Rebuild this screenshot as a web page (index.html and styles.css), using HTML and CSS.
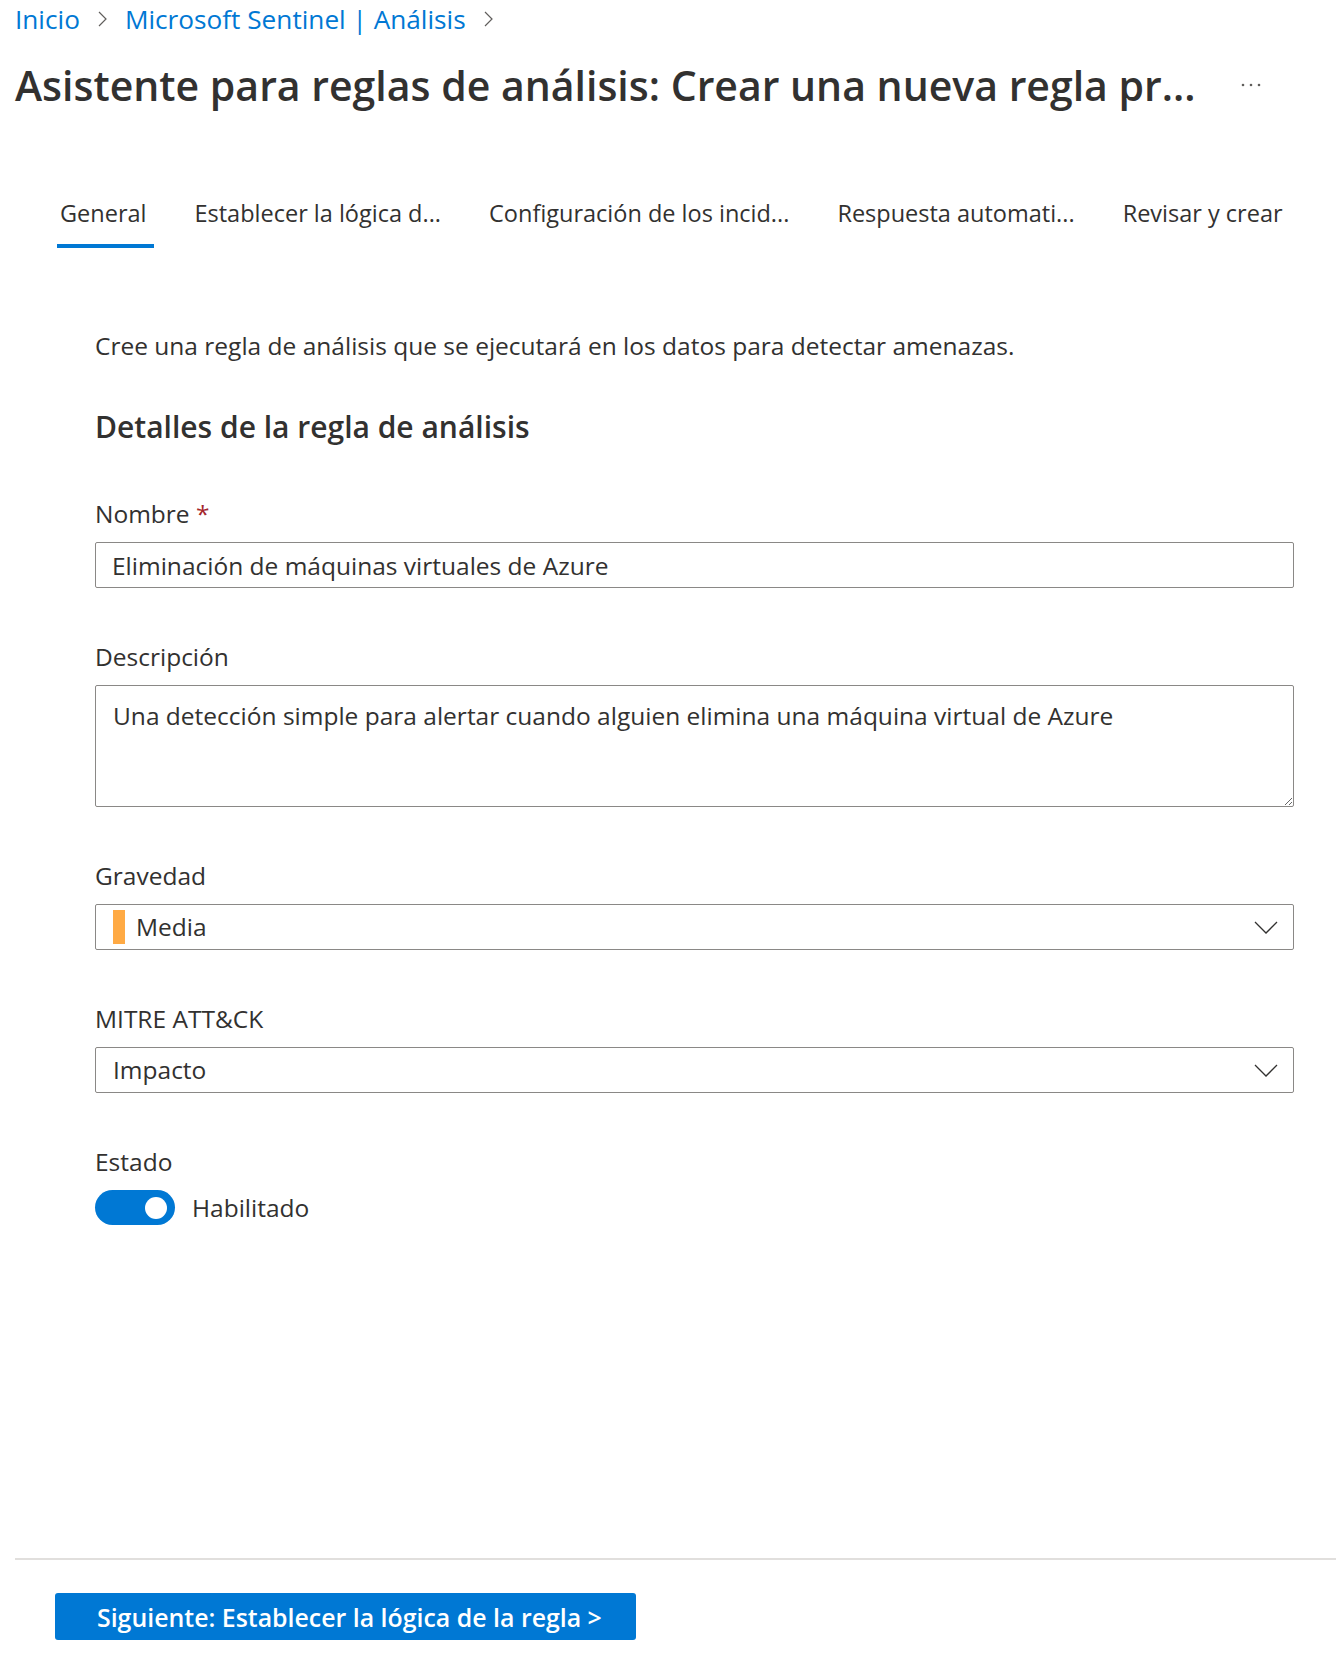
FILE: index.html
```html
<!DOCTYPE html>
<html lang="es">
<head>
    <meta charset="UTF-8">
    <meta name="viewport" content="width=device-width, initial-scale=1.0">
    <title>Asistente para reglas de análisis</title>
    <link rel="stylesheet" href="styles.css">
</head>
<body>
    <div class="page">
        <nav class="breadcrumb">
            <a class="crumb" href="#">Inicio</a>
            <svg class="crumb-sep" width="9" height="16" viewBox="0 0 9 16"><path d="M1 1 L8 8 L1 15"/></svg>
            <a class="crumb" href="#">Microsoft Sentinel | Análisis</a>
            <svg class="crumb-sep" width="9" height="16" viewBox="0 0 9 16"><path d="M1 1 L8 8 L1 15"/></svg>
        </nav>

        <div class="title-row">
            <h1 class="title">Asistente para reglas de análisis: Crear una nueva regla pr...</h1>
            <svg class="more" width="20" height="4" viewBox="0 0 20 4">
                <circle cx="2" cy="2" r="1.3"/>
                <circle cx="10" cy="2" r="1.3"/>
                <circle cx="18" cy="2" r="1.3"/>
            </svg>
        </div>

        <div class="tabs">
            <div class="tab active">General</div>
            <div class="tab">Establecer la lógica d...</div>
            <div class="tab">Configuración de los incid...</div>
            <div class="tab">Respuesta automati...</div>
            <div class="tab">Revisar y crear</div>
        </div>

        <main class="form">
            <p class="intro">Cree una regla de análisis que se ejecutará en los datos para detectar amenazas.</p>
            <h2 class="section-title">Detalles de la regla de análisis</h2>

            <div class="field">
                <label class="field-label" for="name">Nombre <span class="required">*</span></label>
                <input class="text-input" id="name" type="text" value="Eliminación de máquinas virtuales de Azure">
            </div>

            <div class="field">
                <label class="field-label" for="desc">Descripción</label>
                <textarea class="text-area" id="desc">Una detección simple para alertar cuando alguien elimina una máquina virtual de Azure</textarea>
            </div>

            <div class="field">
                <div class="field-label">Gravedad</div>
                <div class="dropdown">
                    <span class="severity medium"></span>
                    <span class="dropdown-value">Media</span>
                    <svg class="chevron" width="24" height="13" viewBox="0 0 24 13"><path d="M1 1 L12 12 L23 1"/></svg>
                </div>
            </div>

            <div class="field">
                <div class="field-label">MITRE ATT&amp;CK</div>
                <div class="dropdown">
                    <span class="dropdown-value">Impacto</span>
                    <svg class="chevron" width="24" height="13" viewBox="0 0 24 13"><path d="M1 1 L12 12 L23 1"/></svg>
                </div>
            </div>

            <div class="field">
                <div class="field-label">Estado</div>
                <div class="toggle-row">
                    <span class="switch on"><span class="knob"></span></span>
                    <span class="toggle-text">Habilitado</span>
                </div>
            </div>
        </main>

        <footer class="footer">
            <button class="primary">Siguiente: Establecer la lógica de la regla &gt;</button>
        </footer>
    </div>
</body>
</html>
```

FILE: styles.css
```css
body {
    margin: 0;
    padding: 0;
    font-family: "Open Sans", "Noto Sans", sans-serif;
    color: #323130;
    background-color: #fff;
}
.page {
    display: flex;
    flex-direction: column;
    height: 100vh;
    padding-left: 15px;
    box-sizing: border-box;
}

/* header */
.breadcrumb {
    display: flex;
    align-items: center;
    gap: 18px;
    height: 38px;
    font-size: 26.2px;
}
.crumb {
    color: #0078d4;
    text-decoration: none;
    line-height: 38px;
}
.crumb-sep path {
    fill: none;
    stroke: #605e5c;
    stroke-width: 1.2;
}
.title-row {
    display: flex;
    align-items: center;
    margin-top: 19px;
}
.title {
    margin: 0;
    font-size: 41px;
    line-height: 56px;
    font-weight: 600;
    white-space: nowrap;
}
.more {
    margin-left: 46px;
    fill: #605e5c;
}

/* tabs */
.tabs {
    display: flex;
    gap: 37px;
    margin-top: 84px;
    margin-left: 42px;
}
.tab {
    font-size: 23.5px;
    line-height: 32px;
    padding: 0 8px 15px 3px;
    border-bottom: 4px solid transparent;
    white-space: nowrap;
}
.tab.active {
    border-bottom-color: #0078d4;
}

/* form */
.form {
    flex: 1;
    padding: 81px 42px 0 80px;
    font-size: 24.5px;
    line-height: 34px;
}
.intro {
    margin: 0;
}
.section-title {
    margin: 45px 0 0;
    font-size: 30px;
    line-height: 38px;
    font-weight: 600;
}
.field {
    margin-top: 52px;
}
.section-title + .field {
    margin-top: 51px;
}
.field-label {
    display: block;
    margin-bottom: 11px;
}
.required {
    color: #a4262c;
}
.text-input, .text-area {
    display: block;
    width: 100%;
    box-sizing: border-box;
    border: 1px solid #8a8886;
    border-radius: 2px;
    font-family: inherit;
    font-size: 24.5px;
    color: #323130;
    outline: none;
}
.text-input {
    height: 46px;
    padding: 0 16px;
}
.text-area {
    height: 122px;
    padding: 13px 17px;
    line-height: 34px;
    resize: vertical;
}
.dropdown {
    display: flex;
    align-items: center;
    height: 46px;
    box-sizing: border-box;
    border: 1px solid #8a8886;
    border-radius: 2px;
    padding: 0 15px 0 17px;
}
.severity {
    width: 12px;
    height: 34px;
    margin-right: 11px;
}
.severity.medium {
    background-color: #ffaa44;
}
.dropdown-value {
    flex: 1;
}
.chevron path {
    fill: none;
    stroke: #323130;
    stroke-width: 1.3;
}
.toggle-row {
    display: flex;
    align-items: center;
    gap: 17px;
}
.switch {
    display: flex;
    align-items: center;
    justify-content: flex-end;
    width: 80px;
    height: 35px;
    box-sizing: border-box;
    padding-right: 8px;
    border-radius: 18px;
    background-color: #0078d4;
}
.knob {
    width: 22px;
    height: 22px;
    border-radius: 50%;
    background-color: #fff;
}

/* footer */
.footer {
    border-top: 2px solid #e1dfdd;
    padding: 33px 0 18px 40px;
}
.primary {
    height: 47px;
    padding: 0 34px 0 42px;
    border: none;
    border-radius: 3px;
    background-color: #0078d4;
    color: #fff;
    font-family: inherit;
    font-size: 24.9px;
    font-weight: 600;
    cursor: pointer;
}
.primary:hover {
    background-color: #106ebe;
}
```
